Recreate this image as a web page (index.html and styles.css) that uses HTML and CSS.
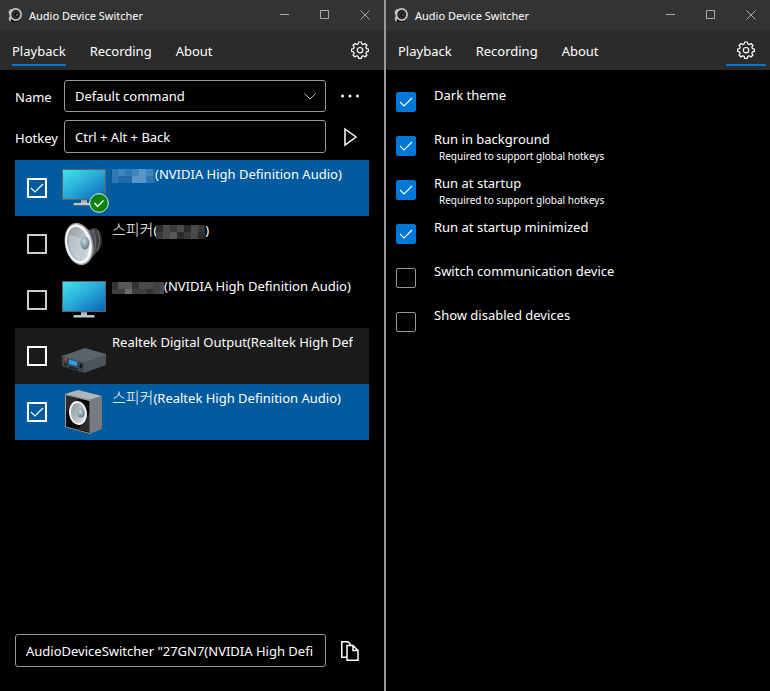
FILE: index.html
```
<!DOCTYPE html>
<html lang="en">
<head>
<meta charset="utf-8">
<title>Audio Device Switcher</title>
<link rel="stylesheet" href="styles.css">
</head>
<body>
<svg class="defs" aria-hidden="true">
  <defs>
    <linearGradient id="screen" x1="0" y1="0" x2="1" y2="1">
      <stop offset="0" stop-color="#40e4ec"/><stop offset=".5" stop-color="#27a9d8"/><stop offset="1" stop-color="#0862b8"/>
    </linearGradient>
    <linearGradient id="stand" x1="0" y1="0" x2="0" y2="1">
      <stop offset="0" stop-color="#7c8288"/><stop offset="1" stop-color="#d4d9dd"/>
    </linearGradient>
    <linearGradient id="cone" x1="0" y1="0" x2="1" y2="1">
      <stop offset="0" stop-color="#8c969e"/><stop offset=".6" stop-color="#b9c2c9"/><stop offset="1" stop-color="#e0e5e8"/>
    </linearGradient>
    <linearGradient id="magnet" x1="0" y1="0" x2="1" y2="0">
      <stop offset="0" stop-color="#777b7e"/><stop offset="1" stop-color="#2a2c2e"/>
    </linearGradient>
    <radialGradient id="dome" cx=".4" cy=".35" r=".7">
      <stop offset="0" stop-color="#c8dbe4"/><stop offset="1" stop-color="#5d7482"/>
    </radialGradient>
    <symbol id="logo" viewBox="0 0 16 16">
      <path d="M2 2 7 1 4 6 4 11 7 15 2 15 .5 12 2 9 .5 5Z" fill="#c0c0c0"/>
      <path d="M3 12 8 14 13 13 10 15.500 3 15.500Z" fill="#090909"/>
      <ellipse cx="8.300" cy="7.500" rx="5.700" ry="6" fill="#222" stroke="#c4c4c4" stroke-width="1.800"/>
      <ellipse cx="9" cy="7.700" rx="3" ry="3.600" fill="#101010" stroke="#444"/>
      <circle cx="9.500" cy="8" r="1" fill="#666"/>
    </symbol>
    <symbol id="gear" viewBox="0 0 18 18">
      <g fill="none" stroke="#fff" stroke-width="1.200" stroke-linejoin="round">
        <path d="M7.600 1h2.800l.4 2 1.500.6 1.700-1.100 2 2-1.200 1.700.6 1.400 2 .4v2.400l-2 .5-.6 1.400 1.200 1.700-2 2-1.700-1.200-1.500.6-.4 2H7.600l-.4-2-1.500-.6L4 16l-2-2 1.200-1.700-.6-1.400-2-.5V8l2-.4.6-1.400L2 4.500l2-2 1.700 1.100L7.200 3Z"/>
        <circle cx="9" cy="9.200" r="2.700"/>
      </g>
    </symbol>
    <symbol id="monitor" viewBox="0 0 48 48">
      <path d="M21 35h6v5h-6z" fill="url(#stand)"/>
      <path d="M14 39h20l1 3H13z" fill="#bcc7ce"/><path d="M13 41h22v1H13z" fill="#59646b"/>
      <path d="M2 5h44v31H2z" fill="#5d6264"/><path d="M3 6h42v29H3z" fill="url(#screen)"/>
    </symbol>
    <symbol id="driver" viewBox="0 0 48 48">
      <path d="M21 4 29 10 34 8Q38 8 41 14 44 25 38 31L28 42Z" fill="url(#magnet)"/>
      <path d="M33 10q5 12 0 24M37.500 10q4 11 0 21" fill="none" stroke="#85898c" stroke-width=".7"/>
      <ellipse cx="19" cy="24" rx="14" ry="21.500" transform="rotate(-12 19 24)" fill="#9b9b9b"/>
      <ellipse cx="18.500" cy="24" rx="13" ry="20" transform="rotate(-12 18.500 24)" fill="#f7f7f7"/>
      <ellipse cx="18" cy="24" rx="10.500" ry="17.500" transform="rotate(-12 18 24)" fill="url(#cone)"/>
      <path d="M9 15 22 18 24 28 19 40Q12 36 9 27Z" fill="#d4dbe0" opacity=".45"/>
      <ellipse cx="25" cy="23" rx="4.500" ry="6.500" fill="url(#dome)"/>
    </symbol>
    <symbol id="receiver" viewBox="0 0 48 48">
      <path d="M2 24 25 16 46 22 25 30Z" fill="#59636a"/>
      <path d="M2 24 24 30V41L2 34Z" fill="#3d474d"/><path d="M24 30 46 22V33L24 41Z" fill="#4a545b"/>
      <path d="M2 24 24 30 46 22" fill="none" stroke="#687279" stroke-width=".7"/>
      <path d="M9 27.500 17 29.500V34L9 32Z" fill="#279cf3"/>
      <path d="M5.500 26v2.500" stroke="#e15252" stroke-width="1.300"/><path d="M4 32l3 1M9 35l9 2" stroke="#182026" stroke-width="1.500"/>
      <ellipse cx="21" cy="34" rx="1.600" ry="2.300" fill="#141a1f"/>
    </symbol>
    <symbol id="speaker" viewBox="0 0 48 48">
      <path d="M35 40 44 40 30 46Z" fill="#222" opacity=".3"/>
      <path d="M5 6 18 2 42 8 30 12Z" fill="#b2b5b9"/><path d="M30 12 42 8V41L30 46Z" fill="#777a82"/>
      <path d="M5 6 30 12V46L5 39Z" fill="#a09c97"/><path d="M6 7.500 29.500 13V45L6 38.500Z" fill="#090909"/>
      <path d="M6 7.500 19 10.500 6 23ZM29 26V44L18 41.500Z" fill="#2b2b2b"/>
      <ellipse cx="18" cy="25" rx="9" ry="12" transform="rotate(-8 18 25)" fill="#f2f2f2"/>
      <ellipse cx="18" cy="25" rx="7" ry="10" transform="rotate(-8 18 25)" fill="url(#cone)"/>
      <ellipse cx="21" cy="25" rx="3.500" ry="4.500" fill="url(#dome)"/>
    </symbol>
  </defs>
</svg>

<main class="desktop">
  <section class="window" aria-label="Playback window">
    <header class="titlebar">
      <svg class="logo" aria-hidden="true"><use href="#logo"/></svg>
      <h1>Audio Device Switcher</h1>
      <div class="caption">
        <button aria-label="Minimize"><svg viewBox="0 0 10 10"><path d="M0 4.500h9"/></svg></button>
        <button aria-label="Maximize"><svg viewBox="0 0 10 10"><path d="M.5.5h8v8h-8z"/></svg></button>
        <button aria-label="Close"><svg viewBox="0 0 10 10"><path d="m.5.5 9 9m0-9-9 9"/></svg></button>
      </div>
    </header>
    <nav class="tabs">
      <a class="tab active" href="#playback">Playback</a>
      <a class="tab" href="#recording">Recording</a>
      <a class="tab" href="#about">About</a>
      <button class="settings" aria-label="Settings"><svg><use href="#gear"/></svg></button>
    </nav>
    <div class="content">
      <div class="field">
        <label for="name">Name</label>
        <select id="name" class="box"><option>Default command</option></select>
        <button class="tool" aria-label="More"><svg viewBox="0 0 20 20" fill="#fff"><circle cx="2.500" cy="10" r="1.500"/><circle cx="10" cy="10" r="1.500"/><circle cx="17.500" cy="10" r="1.500"/></svg></button>
      </div>
      <div class="field">
        <label for="hotkey">Hotkey</label>
        <input id="hotkey" class="box" type="text" value="Ctrl + Alt + Back">
        <button class="tool" aria-label="Run"><svg viewBox="0 0 20 20" fill="none" stroke="#fff" stroke-width="1.500"><path d="M5 2 16 10 5 18Z"/></svg></button>
      </div>
      <ul class="devices">
        <li><label class="device selected"><input type="checkbox" checked>
          <span class="picture"><svg><use href="#monitor"/></svg><svg class="badge" viewBox="0 0 20 20"><circle cx="10" cy="10" r="9.300" fill="#0b820b" stroke="#e7eee7"/><path d="m5.500 10 3 3.500 6-6" fill="none" stroke="#fff" stroke-width="1.500"/></svg></span>
          <span class="label"><svg class="mosaic first" viewBox="0 0 44 14" shape-rendering="crispEdges"><path fill="#2e78b3" d="M0 0h44v14H0z"/><path fill="#3f86bd" d="M7 0h7v7H7zM21 0h7v7h-7zM35 0h7v7h-7z"/><path fill="#5796c8" d="M28 0h7v14h-7zM21 7h7v7h-7z"/><path fill="#206aaa" d="M7 7h14v7H7zM42 0h2v14h-2z"/></svg>(NVIDIA High Definition Audio)</span></label></li>
        <li><label class="device"><input type="checkbox">
          <span class="picture"><svg><use href="#driver"/></svg></span>
          <span class="label"><span class="korean" lang="ko">스피커</span>(<svg class="mosaic second" viewBox="0 0 49 14" shape-rendering="crispEdges"><path fill="#393939" d="M0 0h49v14H0z"/><path fill="#4a4a4a" d="M7 0h7v7H7zM21 0h7v7h-7zM35 0h7v14h-7zM7 7h7v7H7z"/><path fill="#595959" d="M14 7h7v7h-7z"/><path fill="#2b2b2b" d="M0 0h7v7H0zM28 0h7v7h-7zM21 7h7v7h-7zM42 7h7v7h-7z"/></svg>)</span></label></li>
        <li><label class="device"><input type="checkbox">
          <span class="picture"><svg><use href="#monitor"/></svg></span>
          <span class="label"><svg class="mosaic third" viewBox="0 0 53 12" shape-rendering="crispEdges"><path fill="#404040" d="M0 0h53v12H0z"/><path fill="#585858" d="M7 0h14v7H7z"/><path fill="#6b6b6b" d="M14 7h7v5h-7z"/><path fill="#333" d="M0 0h7v7H0zM21 0h7v7h-7zM35 7h7v5h-7z"/><path fill="#4a4a4a" d="M28 0h14v7H28zM49 0h4v12h-4z"/></svg>(NVIDIA High Definition Audio)</span></label></li>
        <li><label class="device hover"><input type="checkbox">
          <span class="picture"><svg><use href="#receiver"/></svg></span>
          <span class="label">Realtek Digital Output(Realtek High Def</span></label></li>
        <li><label class="device selected"><input type="checkbox" checked>
          <span class="picture"><svg><use href="#speaker"/></svg></span>
          <span class="label"><span class="korean" lang="ko">스피커</span>(Realtek High Definition Audio)</span></label></li>
      </ul>
      <div class="field command">
        <input class="box" type="text" aria-label="Command line" value="AudioDeviceSwitcher &quot;27GN7(NVIDIA High Defi">
        <button class="tool" aria-label="Copy"><svg viewBox="0 0 20 20" fill="none" stroke="#fff" stroke-width="1.500"><path d="M7 16.300H1.800V.8h6l3 3M7 4.500h6l5 5V19.300H7ZM13 4.500V9.500h5"/></svg></button>
      </div>
    </div>
  </section>

  <section class="window" aria-label="Settings window">
    <header class="titlebar">
      <svg class="logo" aria-hidden="true"><use href="#logo"/></svg>
      <h1>Audio Device Switcher</h1>
      <div class="caption">
        <button aria-label="Minimize"><svg viewBox="0 0 10 10"><path d="M0 4.500h9"/></svg></button>
        <button aria-label="Maximize"><svg viewBox="0 0 10 10"><path d="M.5.5h8v8h-8z"/></svg></button>
        <button aria-label="Close"><svg viewBox="0 0 10 10"><path d="m.5.5 9 9m0-9-9 9"/></svg></button>
      </div>
    </header>
    <nav class="tabs">
      <a class="tab" href="#playback">Playback</a>
      <a class="tab" href="#recording">Recording</a>
      <a class="tab" href="#about">About</a>
      <button class="settings active" aria-label="Settings"><svg><use href="#gear"/></svg></button>
    </nav>
    <div class="options">
      <label class="option"><input type="checkbox" checked><span>Dark theme</span></label>
      <label class="option"><input type="checkbox" checked><span>Run in background<small>Required to support global hotkeys</small></span></label>
      <label class="option"><input type="checkbox" checked><span>Run at startup<small>Required to support global hotkeys</small></span></label>
      <label class="option"><input type="checkbox" checked><span>Run at startup minimized</span></label>
      <label class="option"><input type="checkbox"><span>Switch communication device</span></label>
      <label class="option"><input type="checkbox"><span>Show disabled devices</span></label>
    </div>
  </section>
</main>
</body>
</html>
```
FILE: styles.css
```
* { box-sizing: border-box; }
body {
  margin: 0;
  background: #000;
  color: #fff;
  font: 13px/20px "Noto Sans", "Noto Sans CJK KR", sans-serif;
}
button, input, select { font: inherit; color: inherit; }
button { display: grid; place-items: center; padding: 0; border: 0; background: none; }
a { color: inherit; text-decoration: none; }
.defs { position: absolute; width: 0; height: 0; }

.desktop { display: grid; grid-template-columns: 1fr 1fr; gap: 2px; min-height: 100vh; background: #999; }
.window { display: flex; flex-direction: column; min-width: 0; background: #000; }

.titlebar { display: flex; align-items: center; gap: 6px; height: 30px; padding-left: 8px; background: #333; }
.titlebar h1 { margin: 0; padding-top: 2px; font-size: 11px; font-weight: 400; }
.logo { width: 15px; height: 16px; }
.caption { display: flex; margin-left: auto; }
.caption button { width: 40px; height: 28px; padding-left: 2px; }
.caption svg { width: 10px; height: 10px; fill: none; stroke: #aaa; }

.tabs { display: flex; gap: 24px; height: 40px; padding: 0 4px 0 12px; background: #2b2b2b; }
.tab { padding-top: 11px; }
.tab, .settings { height: 36px; border-bottom: 2px solid transparent; }
.tab.active, .settings.active { border-color: #0078d7; border-radius: 1px; }
.settings { width: 40px; margin-left: auto; padding-top: 6px; }
.settings svg { width: 18px; height: 18px; }

.content { display: flex; flex: 1; flex-direction: column; padding: 10px 15px 24px; }
.field { display: flex; align-items: center; margin-bottom: 8px; }
.field label { width: 49px; padding-top: 2px; }
.box {
  flex: 1;
  min-width: 0;
  height: 33px;
  padding: 0 5px 0 10px;
  border: 1px solid #999;
  border-radius: 3px;
  background: #000;
  outline: 0;
}
select.box {
  height: 32px;
  appearance: none;
  background: #000 url("data:image/svg+xml,%3Csvg xmlns='http://www.w3.org/2000/svg' width='12' height='7' fill='none' stroke='%23bbb'%3E%3Cpath d='M.5.5 6 6 11.500.5'/%3E%3C/svg%3E") no-repeat right 9px center;
}
.tool { width: 43px; height: 32px; padding-left: 5px; }
.tool svg { width: 20px; height: 20px; }
.field.command { margin: auto 0 0; }

.devices { margin: -1px 0 0; padding: 0; list-style: none; }
.device { display: flex; height: 56px; padding: 0 10px 0 12px; }
.device.selected { background: #005a9e; }
.device.hover { background: #1a1a1a; }
.device input {
  flex: none;
  align-self: center;
  appearance: none;
  width: 20px;
  height: 20px;
  margin: 0 13px 0 0;
  border: 2px solid #ccc;
}
.device.selected input, .device.hover input { border-color: #fff; }
.device input:checked, .option input:checked {
  background: url("data:image/svg+xml,%3Csvg xmlns='http://www.w3.org/2000/svg' width='16' height='16' fill='none' stroke='white' stroke-width='1.200'%3E%3Cpath d='m2 8 4 4 8-8'/%3E%3C/svg%3E") no-repeat center;
}
.picture { position: relative; flex: none; width: 48px; height: 48px; margin: 4px 4px 0 0; }
.picture svg { display: block; width: 48px; height: 48px; }
.picture .badge { position: absolute; right: -1px; bottom: -1px; width: 20px; height: 20px; }
.label { padding-top: 4px; overflow: hidden; white-space: nowrap; }
.korean { font-family: "Noto Sans CJK KR", sans-serif; font-size: 15px; font-weight: 300; line-height: 1; }
.mosaic { height: 14px; margin: 0 0 0 -1px; vertical-align: middle; }
.first { width: 44px; }
.second { width: 49px; }
.third { width: 53px; height: 12px; }

.options { padding: 15px 10px; }
.option { display: flex; gap: 18px; height: 44px; }
.option input {
  flex: none;
  appearance: none;
  width: 20px;
  height: 20px;
  margin: 7px 0 0;
  border: 1px solid #999;
  border-radius: 2px;
}
.option input:checked { border-color: #0078d7; background-color: #0078d7; }
.option small { display: block; padding-left: 5px; font-size: 10px; line-height: 14px; }
```
